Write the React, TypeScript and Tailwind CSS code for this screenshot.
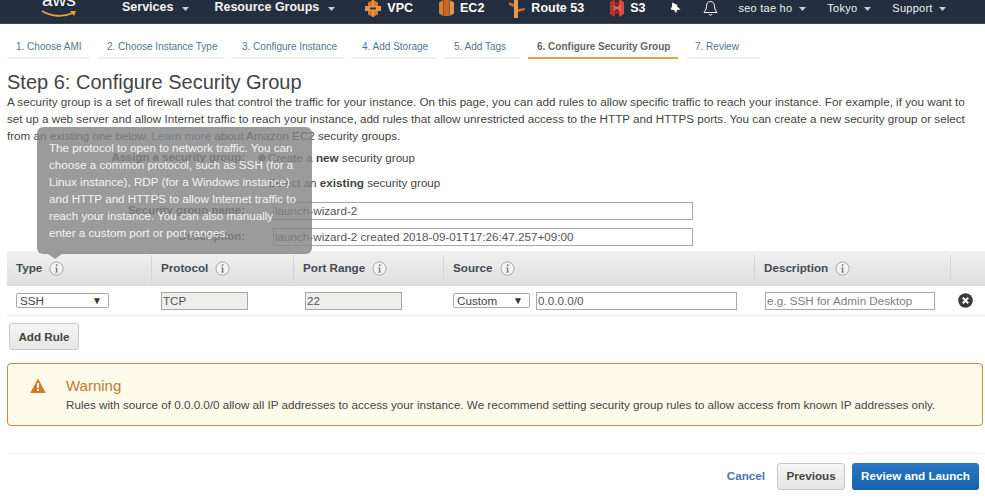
import React from "react";

const tabs = [
  { label: "1. Choose AMI", w: "w-[83px]" },
  { label: "2. Choose Instance Type", w: "w-[127px]" },
  { label: "3. Configure Instance", w: "w-[112px]" },
  { label: "4. Add Storage", w: "w-[84px]" },
  { label: "5. Add Tags", w: "w-[75px]" },
  { label: "6. Configure Security Group", w: "w-[150px]", active: true },
  { label: "7. Review", w: "w-[74px]" },
];

const Caret = ({ className }: { className: string }) => (
  <svg width="7" height="4" viewBox="0 0 7 4" className={`shrink-0 mt-[2px] ${className}`}>
    <path d="M0 0h7L3.5 4z" fill="#c9ced4" />
  </svg>
);

const InfoIcon = () => (
  <svg width="15" height="15" viewBox="0 0 15 15" className="ml-[7px] shrink-0">
    <circle cx="7.5" cy="7.5" r="6.6" fill="#f4f4f4" stroke="#a9a9a9" />
    <rect x="6.8" y="3.4" width="1.6" height="1.7" fill="#777" />
    <path d="M6 6.4h2.3v4.4H9.2v.8H6v-.8h.9V7.2H6z" fill="#777" />
  </svg>
);

const VpcIcon = () => (
  <svg width="16" height="17" viewBox="0 0 16 17" className="shrink-0">
    <path d="M3 2.500L8 0l5 2.500v12L8 17l-5-2.500z" fill="#d9762b" />
    <path d="M0 6h16v5H0z" fill="#e8934c" />
    <path d="M5 7.500h6v2H5z" fill="#3a3a3a" />
    <path d="M8 0v6M8 11v6" stroke="#f3b27a" strokeWidth="1" />
  </svg>
);

const Ec2Icon = () => (
  <svg width="15" height="18" viewBox="0 0 15 18" className="shrink-0">
    <path d="M0 3.500l4.500-2.500v16L0 14.500z" fill="#dd7c2c" />
    <path d="M5 1h5v16H5z" fill="#c9661f" />
    <path d="M10.500 1L15 3.500v11L10.500 17z" fill="#e8924a" />
  </svg>
);

const RouteIcon = () => (
  <svg width="16" height="19" viewBox="0 0 16 19" className="shrink-0">
    <path d="M5 0h4v19H5z" fill="#e39a58" />
    <path d="M0 3l5 2v3L0 6zM9 10l7-1v2l-7 2z" fill="#cf6a24" />
  </svg>
);

const S3Icon = () => (
  <svg width="14" height="18" viewBox="0 0 14 18" className="shrink-0">
    <path d="M0 3l5-3v18l-5-3z" fill="#b8352b" />
    <path d="M14 3L9 0v18l5-3z" fill="#d3503f" />
    <rect x="5" y="3" width="4" height="12" fill="#8f2a24" />
    <path d="M3 7l8 4M3 11l8-4" stroke="#e38476" strokeWidth="1.2" />
  </svg>
);

const NavItem = ({ icon, label, className }: { icon: React.ReactNode; label: string; className: string }) => (
  <div className={`flex items-center shrink-0 ${className}`}>
    {icon}
    <span className="ml-[6px] text-[12.5px] font-bold text-white">{label}</span>
  </div>
);

const HeaderCell = ({ label, className }: { label: string; className: string }) => (
  <div className={`flex items-center h-full pl-[9px] ${className}`}>
    <span className="font-bold text-[#444b52]">{label}</span>
    <InfoIcon />
  </div>
);

const Separator = () => <div className="w-px h-[26px] bg-[#d5d5d5]" />;

const FieldInput = ({ value, className }: { value: string; className: string }) => (
  <div className={`border border-[#a8a8a8] px-[1px] h-[18px] leading-[16px] text-[#555] ${className}`}>{value}</div>
);

const FakeSelect = ({ value, className }: { value: string; className: string }) => (
  <div className={`flex items-center justify-between border border-[#ababab] rounded-[2px] bg-white h-[15px] pl-[3px] pr-[6px] text-[#444] ${className}`}>
    <span>{value}</span>
    <span className="text-[10px] leading-[10px] text-[#333]">▼</span>
  </div>
);

export default function App() {
  return (
    <div className="relative w-[985px] h-[501px] overflow-hidden bg-white text-[11.67px] text-[#444] font-['Liberation_Sans',Arial,sans-serif]">
      {/* top nav */}
      <div className="flex items-center h-[24px] pb-[7px] bg-[#232f3e] overflow-hidden border-b border-[#3a4553]">
        <div className="relative w-[122px] shrink-0 h-[24px] -mb-[7px]">
          <span className="absolute left-[42px] top-[-11px] text-[19px] text-white leading-[22px]">aws</span>
          <svg width="36" height="8" viewBox="0 0 36 8" className="absolute left-[41px] top-[10px]">
            <path d="M1 1c10 6 22 6 31 2" stroke="#f0a030" strokeWidth="1.8" fill="none" />
            <path d="M29 1l6 0-2 5z" fill="#f0a030" />
          </svg>
        </div>
        <span className="text-[12.5px] font-bold text-[#f2f3f4] -mt-[2px] whitespace-nowrap">Services</span>
        <Caret className="ml-[9px]" />
        <span className="ml-[25px] text-[12.5px] font-bold text-[#f2f3f4] -mt-[2px] whitespace-nowrap">Resource Groups</span>
        <Caret className="ml-[9px]" />
        <NavItem icon={<VpcIcon />} label="VPC" className="ml-[30px]" />
        <NavItem icon={<Ec2Icon />} label="EC2" className="ml-[26px]" />
        <NavItem icon={<RouteIcon />} label="Route 53" className="ml-[25px]" />
        <NavItem icon={<S3Icon />} label="S3" className="ml-[26px]" />
        <svg width="12" height="12" viewBox="0 0 12 12" className="ml-[24px] shrink-0">
          <path d="M3 0.500l5.500 2.500-.5 1.500 3.500 3-3.500.5-1 3.500-2-3.500-3.500-.5 1.500-3z" fill="#fff" />
        </svg>
        <svg width="15" height="17" viewBox="0 0 15 17" className="ml-[22px] shrink-0">
          <path d="M7.500 1.500c-3 0-4 2.500-4 5 0 3-2 5-2.500 6h13c-.5-1-2.500-3-2.500-6 0-2.500-1-5-4-5zM6 14c.3 1.500 2.700 1.500 3 0" stroke="#fff" strokeWidth="1" fill="none" />
        </svg>
        <span className="ml-[20px] text-[11px] text-[#eef0f2] tracking-[0.25px] whitespace-nowrap">seo tae ho</span>
        <Caret className="ml-[7px]" />
        <span className="ml-[21px] text-[11px] text-[#eef0f2] tracking-[0.25px]">Tokyo</span>
        <Caret className="ml-[7px]" />
        <span className="ml-[21px] text-[11px] text-[#eef0f2] tracking-[0.25px]">Support</span>
        <Caret className="ml-[6px]" />
      </div>

      {/* wizard steps */}
      <div className="flex gap-[8px] mt-[14px] pl-[7px]">
        {tabs.map((t) => (
          <div
            key={t.label}
            className={`${t.w} h-[21px] pl-[9px] text-[10px] leading-[18px] whitespace-nowrap border-b-2 ${
              t.active ? "border-[#dca64f] text-[#666] font-bold" : "border-[#f1f1f1] text-[#54758f]"
            }`}
          >
            {t.label}
          </div>
        ))}
      </div>

      {/* intro */}
      <div className="pl-[7px] pr-[8px]">
        <h1 className="mt-[10px] text-[20px] leading-[26px] text-[#444]">Step 6: Configure Security Group</h1>
        <p className="leading-[17px] -mt-[2px]">
          A security group is a set of firewall rules that control the traffic for your instance. On this page, you can add rules to allow specific traffic to reach your instance. For example, if you want to set up a web server and allow Internet traffic to reach your instance, add rules that allow unrestricted access to the HTTP and HTTPS ports. You can create a new security group or select from an existing one below. <span className="text-[#3b6e9b]">Learn more</span> about Amazon EC2 security groups.
        </p>
      </div>

      {/* form */}
      <div className="mt-[2px]">
        <div className="flex items-center h-[24px]">
          <span className="w-[245px] text-right font-bold text-[11.4px] text-[#555]">Assign a security group:</span>
          <span className="ml-[13px] w-[8px] h-[8px] rounded-full border border-[#888] bg-[#777]" />
          <span className="ml-[2px]">Create a <b>new</b> security group</span>
        </div>
        <div className="flex items-center h-[24px] mt-[1px]">
          <span className="ml-[268px]">Select an <b>existing</b> security group</span>
        </div>
        <div className="flex items-center h-[18px] mt-[7px]">
          <span className="w-[245px] text-right font-bold text-[11.4px] text-[#555]">Security group name:</span>
          <FieldInput value="launch-wizard-2" className="ml-[28px] w-[420px]" />
        </div>
        <div className="flex items-center h-[18px] mt-[8px]">
          <span className="w-[245px] text-right font-bold text-[11.4px] text-[#555]">Description:</span>
          <FieldInput value="launch-wizard-2 created 2018-09-01T17:26:47.257+09:00" className="ml-[28px] w-[420px]" />
        </div>
      </div>

      {/* rules table */}
      <div className="ml-[7px] mt-[5px]">
        <div className="flex items-center h-[35px] bg-gradient-to-b from-[#f1f1f1] to-[#dfdfdf] border-b border-[#d8d8d8]">
          <HeaderCell label="Type" className="w-[144px]" />
          <Separator />
          <HeaderCell label="Protocol" className="w-[141px]" />
          <Separator />
          <HeaderCell label="Port Range" className="w-[149px]" />
          <Separator />
          <HeaderCell label="Source" className="w-[310px]" />
          <Separator />
          <HeaderCell label="Description" className="w-[195px]" />
          <Separator />
        </div>
        <div className="flex items-center h-[30px] border-b border-[#e6e6e6]">
          <FakeSelect value="SSH" className="ml-[9px] w-[93px]" />
          <FieldInput value="TCP" className="ml-[52px] w-[87px] bg-[#eeeeec]" />
          <FieldInput value="22" className="ml-[57px] w-[97px] bg-[#eeeeec]" />
          <FakeSelect value="Custom" className="ml-[51px] w-[77px]" />
          <FieldInput value="0.0.0.0/0" className="ml-[6px] w-[201px]" />
          <FieldInput value="e.g. SSH for Admin Desktop" className="ml-[28px] w-[170px] text-[#808080]" />
          <svg width="15" height="15" viewBox="0 0 15 15" className="ml-[23px]">
            <circle cx="7.500" cy="7.500" r="7.300" fill="#3b3b3b" />
            <path d="M4.800 4.800l5.400 5.400M10.200 4.800l-5.400 5.400" stroke="#fff" strokeWidth="2" />
          </svg>
        </div>
      </div>

      <div className="ml-[9px] mt-[7px] w-[70px] h-[27px] flex items-center justify-center rounded-[3px] border border-[#c8c8c8] bg-gradient-to-b from-[#f6f6f6] to-[#e5e5e5] font-bold text-[#444]">
        Add Rule
      </div>

      {/* warning */}
      <div className="flex ml-[7px] mt-[13px] w-[976px] h-[63px] rounded-[4px] border border-[#c98a3c] bg-[#fffbeb]">
        <svg width="16" height="15" viewBox="0 0 16 15" className="ml-[22px] mt-[14px] shrink-0">
          <path d="M8 0.500L15.800 15H0.200z" fill="#d9791f" />
          <rect x="7" y="5" width="2" height="5" fill="#fff" />
          <rect x="7" y="11" width="2" height="2" fill="#fff" />
        </svg>
        <div className="ml-[20px]">
          <div className="mt-[13px] text-[15px] leading-[18px] text-[#c47a2c]">Warning</div>
          <div className="mt-[2px] leading-[16px]">Rules with source of 0.0.0.0/0 allow all IP addresses to access your instance. We recommend setting security group rules to allow access from known IP addresses only.</div>
        </div>
      </div>

      {/* footer */}
      <div className="ml-[8px] mt-[27px] border-t border-[#eeeeee] flex items-center justify-end h-[44px] pr-[6px] pt-[1px]">
        <span className="font-bold text-[#4a76a8]">Cancel</span>
        <div className="ml-[12px] w-[68px] h-[27px] flex items-center justify-center rounded-[3px] border border-[#c8c8c8] bg-gradient-to-b from-[#f6f6f6] to-[#e5e5e5] font-bold text-[#444]">
          Previous
        </div>
        <div className="ml-[7px] w-[127px] h-[27px] flex items-center justify-center rounded-[3px] bg-gradient-to-b from-[#2a78c4] to-[#1561ab] font-bold text-white">
          Review and Launch
        </div>
      </div>

      {/* tooltip over the form */}
      <div className="absolute left-[37px] top-[127px] w-[275px] h-[127px] rounded-[6px] bg-[#828282]/80 text-[#f4f4f4] pl-[12px] pr-[10px] pt-[12px] leading-[17px]">
        The protocol to open to network traffic. You can choose a common protocol, such as SSH (for a Linux instance), RDP (for a Windows instance) and HTTP and HTTPS to allow Internet traffic to reach your instance. You can also manually enter a custom port or port ranges.
        <div className="absolute left-[11px] bottom-[-5px] w-0 h-0 border-x-[7px] border-x-transparent border-t-[5px] border-t-[#9b9b9b]" />
      </div>
    </div>
  );
}
